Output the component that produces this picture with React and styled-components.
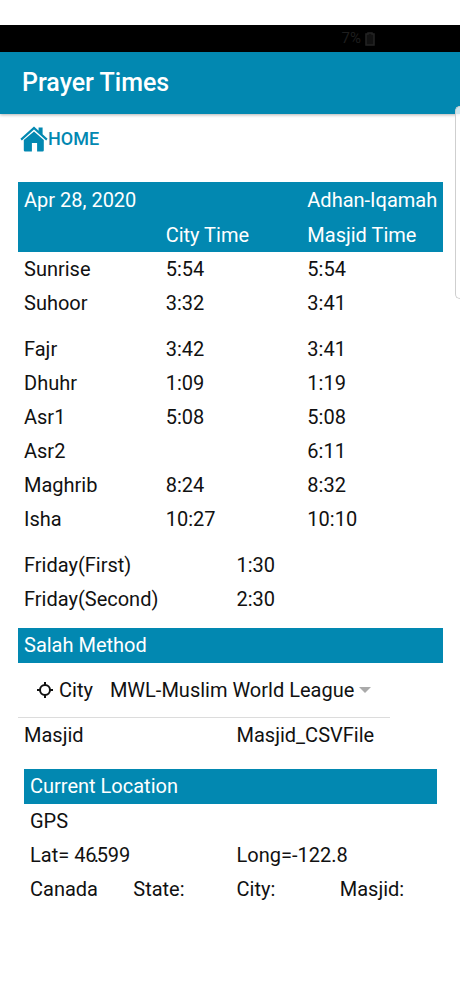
import React from "react";
import styled, { createGlobalStyle } from "styled-components";

const BLUE = "#0288b1";

const GlobalStyle = createGlobalStyle`
  *, *::before, *::after { box-sizing: border-box; }
  body {
    margin: 0;
    background: #fff;
    color: #111;
    font-family: Roboto, "Liberation Sans", sans-serif;
    font-size: 20px;
    line-height: 34px;
  }
`;

const Screen = styled.div`
  position: relative;
  min-height: 100vh;
  padding-top: 25px;
  overflow: hidden;
`;

const StatusBar = styled.div`
  display: flex;
  align-items: center;
  justify-content: flex-end;
  gap: 4px;
  height: 27px;
  padding-right: 85px;
  background: #000;
  color: #1e1e1e;
  font-size: 15px;
  line-height: 27px;
`;

const AppBar = styled.header`
  display: flex;
  align-items: center;
  height: 62px;
  padding: 0 22px;
  background: ${BLUE};
  box-shadow: 0 1px 3px rgba(0, 0, 0, 0.3);
`;

const Title = styled.h1`
  margin: 0;
  color: #fff;
  font-size: 25px;
  font-weight: 500;
`;

const EdgePanel = styled.div`
  position: absolute;
  top: 106px;
  right: 0;
  width: 5px;
  height: 193px;
  background: rgba(255, 255, 255, 0.8);
  border: 1px solid #cfcfcf;
  border-right: 0;
  border-radius: 6px 0 0 6px;
`;

const NavBar = styled.nav`
  display: flex;
  padding: 8px 20px 0;
`;

const HomeLink = styled.a`
  display: flex;
  align-items: center;
  color: ${BLUE};
  font-size: 18px;
  font-weight: 500;
  text-decoration: none;
`;

const Content = styled.main`
  padding: 26px 17px 0 18px;
`;

const Table = styled.table`
  width: 100%;
  margin-top: ${(p) => p.$gap || 0}px;
  border-spacing: 0;
  table-layout: fixed;
`;

const TableHead = styled.thead`
  background: ${BLUE};
  color: #fff;
`;

const Cell = styled.td`
  height: 34px;
  padding: 0 0 0 6px;
  text-align: left;
  font-weight: 400;
  white-space: nowrap;

  thead & {
    height: 35px;
    padding-top: 1px;
  }
`;

const HeadCell = styled(Cell).attrs({ as: "th", scope: "col" })``;
const RowLabel = styled(Cell).attrs({ as: "th", scope: "row" })``;

const SectionTitle = styled.h2`
  margin: ${(p) => p.$gap}px 0 0;
  padding: 0 6px 1px;
  background: ${BLUE};
  color: #fff;
  font-size: 20px;
  font-weight: 400;
  line-height: 34px;
`;

const MethodRow = styled.div`
  display: flex;
  align-items: center;
  width: 372px;
  max-width: 100%;
  height: 55px;
  padding-left: 18px;
  border-bottom: 1px solid #dcdcdc;
`;

const MethodLabel = styled.label`
  display: flex;
  align-items: center;
  gap: 5px;
  margin-right: 17px;
`;

const SelectBox = styled.div`
  position: relative;
  display: flex;
  align-items: center;
`;

const Select = styled.select`
  appearance: none;
  border: 0;
  margin: 0;
  padding: 0 16px 0 0;
  background: transparent;
  color: inherit;
  font: inherit;
`;

const SelectArrow = styled.svg`
  position: absolute;
  right: 0;
  pointer-events: none;
`;

const FieldRow = styled.div`
  display: grid;
  grid-template-columns: repeat(${(p) => p.$columns}, minmax(0, 1fr));
`;

const Field = styled.span`
  padding-left: 6px;
  white-space: nowrap;
`;

const LocationPanel = styled.section`
  padding: 0 6px;
`;

const PointAnchor = styled.span`
  position: relative;
`;

const Point = styled.span`
  position: absolute;
  left: -3px;
`;

const TIMES = [
  ["Fajr", "3:42", "3:41"],
  ["Dhuhr", "1:09", "1:19"],
  ["Asr1", "5:08", "5:08"],
  ["Asr2", "", "6:11"],
  ["Maghrib", "8:24", "8:32"],
  ["Isha", "10:27", "10:10"],
];

const SUN = [
  ["Sunrise", "5:54", "5:54"],
  ["Suhoor", "3:32", "3:41"],
];

const FRIDAY = [
  ["Friday(First)", "1:30"],
  ["Friday(Second)", "2:30"],
];

function Rows({ data }) {
  return (
    <tbody>
      {data.map(([label, ...values]) => (
        <tr key={label}>
          <RowLabel>{label}</RowLabel>
          {values.map((v, i) => (
            <Cell key={i}>{v}</Cell>
          ))}
        </tr>
      ))}
    </tbody>
  );
}

function BatteryIcon() {
  return (
    <svg width="10" height="14" viewBox="0 0 10 14" aria-hidden="true">
      <path d="M3 1h4v1h2v11H1V2h2z" fill="#111" stroke="#242424" strokeWidth="1.5" />
    </svg>
  );
}

function HomeIcon() {
  return (
    <svg width="28" height="26" viewBox="0 0 28 26" fill="currentColor" aria-hidden="true">
      <path d="M14 .6 18.6 4.7V1.6h4v6.7l5 4.5-1.4 1.7L14 3.6 1.8 14.5.4 12.8z" />
      <path d="M14 5.4 23.8 14v10.2q0 1.3-1.3 1.3h-5.4v-8.4h-5.2v8.4H5.1q-1.3 0-1.3-1.3V14z" />
    </svg>
  );
}

function TargetIcon() {
  return (
    <svg width="18" height="18" viewBox="0 0 18 18" fill="none" stroke="#111" strokeWidth="2" aria-hidden="true">
      <circle cx="9" cy="9" r="5" />
      <path d="M9 1v3M9 14v3M1 9h3M14 9h3" />
    </svg>
  );
}

export default function App() {
  return (
    <>
      <GlobalStyle />
      <Screen>
        <StatusBar>
          <span>7%</span>
          <BatteryIcon />
        </StatusBar>
        <AppBar>
          <Title>Prayer Times</Title>
        </AppBar>
        <EdgePanel />
        <NavBar>
          <HomeLink href="#home">
            <HomeIcon />
            HOME
          </HomeLink>
        </NavBar>
        <Content>
          <Table>
            <TableHead>
              <tr>
                <HeadCell>Apr 28, 2020</HeadCell>
                <Cell />
                <HeadCell>Adhan-Iqamah</HeadCell>
              </tr>
              <tr>
                <Cell />
                <HeadCell>City Time</HeadCell>
                <HeadCell>Masjid Time</HeadCell>
              </tr>
            </TableHead>
            <Rows data={SUN} />
          </Table>
          <Table $gap={12}>
            <Rows data={TIMES} />
          </Table>
          <Table $gap={12}>
            <Rows data={FRIDAY} />
          </Table>
          <SectionTitle $gap={12}>Salah Method</SectionTitle>
          <MethodRow>
            <MethodLabel htmlFor="method">
              <TargetIcon />
              City
            </MethodLabel>
            <SelectBox>
              <Select id="method" defaultValue="mwl">
                <option value="mwl">MWL-Muslim World League</option>
              </Select>
              <SelectArrow width="12" height="6" viewBox="0 0 12 6" aria-hidden="true">
                <path d="M0 0h12L6 6z" fill="#aaa" />
              </SelectArrow>
            </SelectBox>
          </MethodRow>
          <FieldRow $columns={2}>
            <Field>Masjid</Field>
            <Field>Masjid_CSVFile</Field>
          </FieldRow>
          <LocationPanel>
            <SectionTitle $gap={17}>Current Location</SectionTitle>
            <FieldRow $columns={1}>
              <Field>GPS</Field>
            </FieldRow>
            <FieldRow $columns={2}>
              <Field>
                Lat= 46
                <PointAnchor>
                  <Point>.</Point>
                </PointAnchor>
                599
              </Field>
              <Field>Long=-122.8</Field>
            </FieldRow>
            <FieldRow $columns={4}>
              <Field>Canada</Field>
              <Field>State:</Field>
              <Field>City:</Field>
              <Field>Masjid:</Field>
            </FieldRow>
          </LocationPanel>
        </Content>
      </Screen>
    </>
  );
}
